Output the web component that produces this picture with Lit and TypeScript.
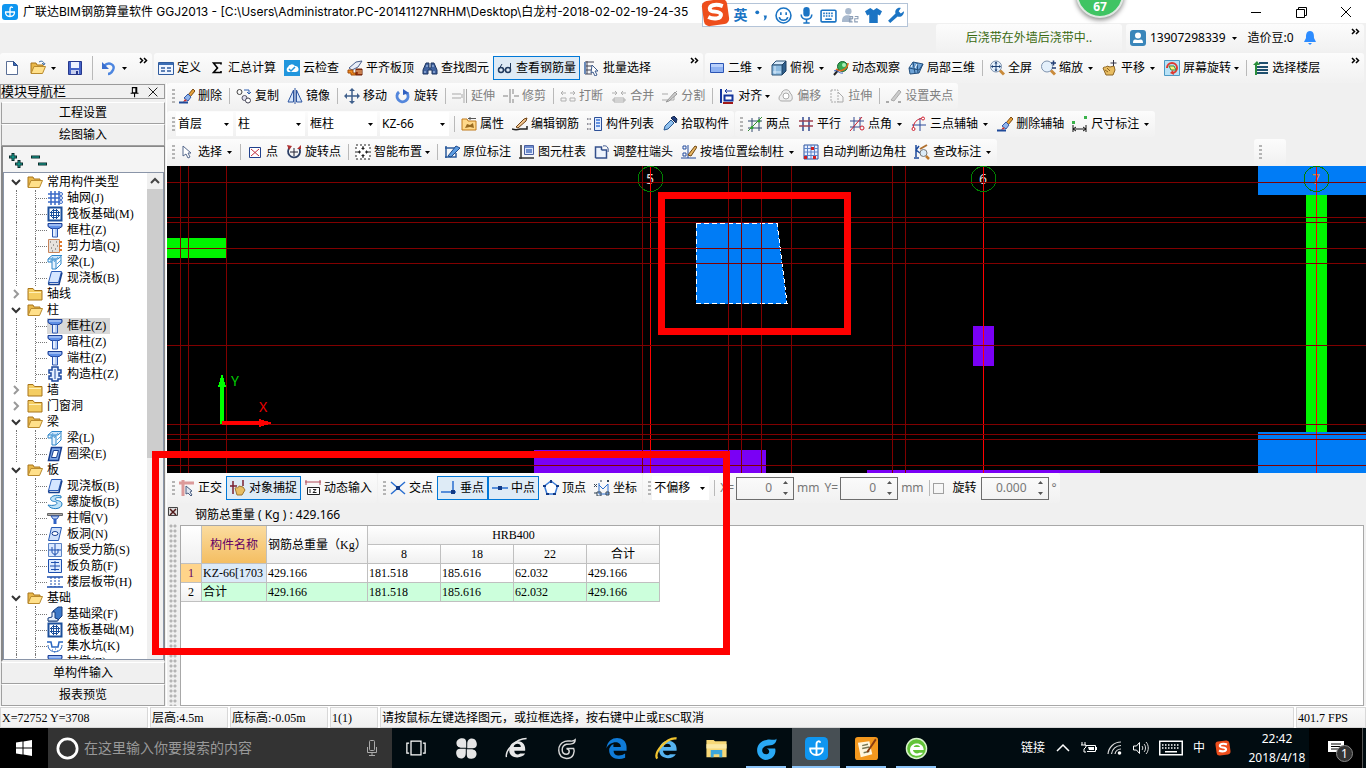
import { LitElement, html, svg, css, nothing, TemplateResult, SVGTemplateResult } from "lit";
import { customElement } from "lit/decorators.js";
import { classMap } from "lit/directives/class-map.js";

const folderOpen = svg`<path d="M1 13V3h5l1 2h6v2" fill="#e9b84a" stroke="#a8741a"/><path d="M1 13.500 4 6.500h11.500L12.500 13.500z" fill="#ffe08a" stroke="#b98a2e"/>`;
const pillar = svg`<path d="M1 1.500h14v3l-3 2H4l-3-2z" fill="#5f8fe6" stroke="#1c3f94"/><path d="M2 3h12" stroke="#d8e6ff"/><path d="M5.500 6.500h5V15h-5z" fill="#e4eeff" stroke="#2a55b0"/><path d="M9 7v7" stroke="#8fb0ea"/>`;
const raft = svg`<path d="M1.500 1.500h13v13h-13z" fill="#fff" stroke="#1b4f9c" stroke-width="2"/><path d="M5 4.500h6M5 11.500h6M4.500 5v6M11.500 5v6M6.500 3v10M9.500 3v10M3 6.500h10M3 9.500h10" stroke="#1b4f9c"/>`;
const beam = svg`<path d="M1 5 5 1.500h10L11 5z" fill="#cfe6fb" stroke="#2f86c9"/><path d="M5 6h4v9H5z" fill="#e6f3ff" stroke="#2f86c9"/><path d="M9 15l5-5V3M1 5v3h4" fill="none" stroke="#2f86c9"/><path d="m3 8 3-5M7 8l4-5M10 10l4-4" stroke="#5aa6df"/>`;
const slab = svg`<path d="M4.500 1.500h10l-3 11h-10z" fill="#d5e6ff" stroke="#2a5cb8"/><path d="m1.500 12.500.500 2h10l3-12" fill="none" stroke="#16408f" stroke-width="1.500"/>`;
const brush = svg`<path d="m9 7 5-6 2 2-5 6z" fill="#e6a23c" stroke="#7a4a12"/><path d="m5 10 4-4 3 3-3 4z" fill="#8fb4ec" stroke="#3558a5"/><path d="M6 11 4 14l4-1z" fill="#d0302a"/><path d="M0 14.500h9" stroke="#1f4a9a" stroke-width="2"/>`;
const cross4 = svg`<path d="M8 1v14M1 8h14" stroke="#40608c" stroke-width="1.500"/><path d="m8 0 3 3H5zM8 16l-3-3h6zM0 8l3-3v6zM16 8l-3 3V5z" fill="#40608c"/>`;
const lens = svg`<circle cx="7" cy="6.500" r="5.500" fill="#e4f0fb" stroke="#7f93ad"/><path d="m11 10.500 4 4" stroke="#c98a3a" stroke-width="3"/>`;

const ICONS: Record<string, SVGTemplateResult> = {
  folder: svg`<path d="M1 4.500V2.500h5l1.500 2H15v9.500H1z" fill="#f4cd62" stroke="#a8741a"/><path d="M2 6.500h12" stroke="#fff0b8"/>`,
  folderOpen, pillar, raft, beam, slab, brush,
  page: svg`<path d="M2.500 1.500h7l4 4v9h-11z" fill="#fff" stroke="#5a6f96"/><path d="M9.500 1.500v4h4z" fill="#3f6cb5" stroke="#2b4d8c"/>`,
  open: svg`${folderOpen}<path d="M9 2c3-2 5 0 5 2m-2-1 2 2 1-2" fill="none" stroke="#3f6fa5"/>`,
  save: svg`<path d="M1.500 1.500h13v13h-13z" fill="#4463c8" stroke="#27388c"/><path d="M4 2h8v6H4z" fill="#eef2ff"/><path d="M4 10h8v4H4z" fill="#c7cfee"/><path d="M9 11h2v3H9z" fill="#27388c"/>`,
  undo: svg`<path d="M3 6c5-5 12-1 9 4-1 2-3 4-5 4" fill="none" stroke="#4d86e0" stroke-width="2.500"/><path d="M1 2v7h7z" fill="#3a6fd0"/>`,
  define: svg`<path d="M.500 2.500h15v12H.500z" fill="#eef4ff" stroke="#2f5b9e"/><path d="M1 3h14v2H1z" fill="#3b6db4"/><path d="M3 8h4M3 11h4M9 8h4M9 11h4" stroke="#2f5b9e" stroke-width="1.500"/>`,
  sigma: svg`<path d="M12 4.500V3H4.500L8.500 8l-4 4.500H12V11" fill="none" stroke="#000" stroke-width="1.600"/>`,
  cloud: svg`<path d="M0 0h16v16H0z" fill="#2196dd"/><path d="M4 12a3 3 0 0 1 0-5 4 4 0 0 1 7-1 3 3 0 0 1 1 6z" fill="#fff"/><path d="m5 9 2 2 4-4" fill="none" stroke="#2196dd" stroke-width="1.500"/>`,
  align: svg`<path d="m2 8 7-6 6-1-4 6-6 3z" fill="#e9eef8" stroke="#4a5f8c"/><path d="M1 10h5v3h3v2H4v-2H1z" fill="#f08a1d" stroke="#a04a0a"/><path d="M9 9h6v6H9z" fill="#a33a12" stroke="#6b1f05"/><path d="M9 11h6M11 13h4" stroke="#f3c48a"/>`,
  find: svg`<path d="M4 3h3v5h2V3h3l3 7v4h-5v-4H6v4H1v-4z" fill="#41639f" stroke="#1d355f"/><path d="M3 11v2M12 11v2M5 5v2M11 5v2" stroke="#b9d0f3"/>`,
  glasses: svg`<circle cx="4" cy="10" r="2.500" fill="none" stroke="#203a5e" stroke-width="1.500"/><circle cx="11" cy="10" r="2.500" fill="none" stroke="#203a5e" stroke-width="1.500"/><path d="M6.500 10h2M2 9l3-5M13.500 9V3" fill="none" stroke="#203a5e"/>`,
  batch: svg`<path d="M1 2h9M1 6h7M1 10h6M3 1v13M1 14h7" stroke="#445"/><path d="M0 2h2v12H0z" fill="#6a8ab8"/><path d="m8 5 6 6h-3l2 4-2 1-2-4-2 1z" fill="#fff" stroke="#3c5a8c"/>`,
  rect2d: svg`<path d="M1.500 3.500h13v9h-13z" fill="#8fb2f2" stroke="#2b55b5"/><path d="M2 4h12v3H2z" fill="#b9d0fb"/>`,
  cube: svg`<path d="m1 5 4-4h10l-4 4z" fill="#d9ebfb" stroke="#2b5276"/><path d="m11 5 4-4v10l-4 4z" fill="#2f5f8c" stroke="#1f3f60"/><path d="M1 5h10v10H1z" fill="#8dbbe0" stroke="#2b5276"/><path d="M4 6v8M2 12h8" stroke="#d9ebfb"/>`,
  orbit: svg`<path d="m1 15 6-7" stroke="#222" stroke-width="2"/><circle cx="9.500" cy="6.500" r="5" fill="#36a852" stroke="#176330"/><circle cx="11" cy="5" r="2" fill="#a8efb8"/><path d="M3 9c4 4 12 0 12-6" fill="none" stroke="#e06a1d" stroke-width="1.500"/><path d="M1 11c3-2 5 3 9 2" fill="none" stroke="#3a62c0"/>`,
  local3d: svg`<path d="m1 8 4-6 10 2-4 9-9 1z" fill="#6ea3d6" stroke="#24507e"/><path d="m1 8 10 2 4-6M5 2l2 11M9 3l1 10" fill="none" stroke="#24507e"/><path d="m3 7 1-2M7 8l2-4" stroke="#fff"/>`,
  full: svg`${lens}<path d="M7 2v9M2.500 6.500h9" stroke="#1b3f74"/><path d="m7 1.500 1.500 2h-3zM7 11.500l-1.500-2h3zM2 6.500l2-1.500v3zM12 6.500 10 8V5z" fill="#1b3f74"/>`,
  zoom: svg`${lens}<path d="M11 3h5M13.500.500v5M12 8h4" stroke="#243f75" stroke-width="1.500"/>`,
  pan: svg`<path d="M1 8c2-2 3 0 4-2l3 1 4-1 1 4-2 5H4z" fill="#e8bd62" stroke="#8c6423"/><path d="M11.500 0v6M8.500 3h6" stroke="#334"/><path d="m3 10 3 2M5 8l3 3" stroke="#8c6423"/>`,
  screenrot: svg`<path d="M.500.500h15v15H.500z" fill="#b9e2f6" stroke="#4c9ac5"/><path d="M3 8a5 5 0 1 1 5 5" fill="none" stroke="#e0392e" stroke-width="2"/><path d="M5 6h5l2 4H7z" fill="#fff27c" stroke="#3a8a3a"/><path d="m9 10-3 3 4 2z" fill="#e0392e"/>`,
  floors: svg`<path d="m0 5 4-4 3 4z" fill="#2b8f3b"/><path d="M6 3h9M4 7h11M4 10h11M4 13h11" stroke="#1f4f6e" stroke-width="2"/><path d="M3 5v10" stroke="#2b8f3b" stroke-width="2"/>`,
  user: svg`<rect width="16" height="16" rx="3" fill="#3a86ba"/><circle cx="8" cy="5.500" r="3" fill="#fff"/><path d="M3 13c0-5 3-3 5-3s5-2 5 3z" fill="#fff"/>`,
  bell: svg`<path d="M8 1c4 0 4 4 4 7l2 4H2l2-4c0-3 0-7 4-7z" fill="#2d8cff"/><path d="M6 13h4l-2 2z" fill="#2d8cff"/>`,
  copy: svg`<circle cx="3.500" cy="4" r="2.500" fill="none" stroke="#444"/><circle cx="8.500" cy="10" r="2.500" fill="#dde" stroke="#556"/><circle cx="12" cy="12.500" r="2.500" fill="#fff" stroke="#445"/><path d="M8 2h5v4m-2-2 2 2 2-2" fill="none" stroke="#2f5fb0"/>`,
  mirror: svg`<path d="M6.500 2v12H1zM9.500 2v12H15z" fill="#d8e7fb" stroke="#2c55a0"/><path d="M8 0v16" stroke="#2c55a0"/>`,
  move: cross4,
  rotate: svg`<path d="M4 4a5.500 5.500 0 1 0 8 1" fill="none" stroke="#5487dc" stroke-width="3"/><path d="M8 1v6l6-2z" fill="#2f5fc0"/>`,
  extend: svg`<path d="M0 6h9M0 10h9M10 6v4M14.500 1v14M12 1v14" stroke="#a9a9a9"/>`,
  trim: svg`<path d="M0 8h5M11 8h5M7 1v14M10 1v5M10 11v4" stroke="#a9a9a9" stroke-width="1.500"/>`,
  brk: svg`<path d="M1 5h5m-3-2L1 5l2 2M15 5h-5m3-2 2 2-2 2M1 10h5v3H1zM10 10h5v3h-5z" fill="none" stroke="#b0b0b0"/>`,
  merge: svg`<path d="M1 5h5M4 3l2 2-2 2M15 5h-5m2-2-2 2 2 2M1 12h14M3 10h10v4H3z" fill="none" stroke="#b0b0b0"/>`,
  split: svg`<path d="M0 6h6M0 12h12V6l3-3" fill="none" stroke="#a9a9a9"/><path d="m4 14 9-10 2 2-8 7z" fill="#ccc" stroke="#999"/>`,
  alignto: svg`<path d="M2 1v14" stroke="#14359c" stroke-width="2"/><path d="M5.500 7.500h8v5h-8z" fill="#fff" stroke="#14359c" stroke-width="2"/><path d="M13 3H6m2-2L6 3l2 2" fill="none" stroke="#14359c"/><path d="M4 15h10" stroke="#a01818" stroke-width="2"/>`,
  offset: svg`<path d="M1 10c0-3 3-3 3-6 3-4 8-2 8 1 3 2 3 8 0 8H4c-2 0-3-1-3-3z" fill="#eee" stroke="#aaa"/><circle cx="8" cy="8" r="3" fill="#fff" stroke="#aaa"/>`,
  stretch: svg`<path d="M2 2h7v12H2z" fill="none" stroke="#aaa" stroke-dasharray="2 1"/><path d="m9 4 5 5M14 9v5H9" fill="none" stroke="#aaa"/>`,
  grip: svg`<path d="M0 14h3M12 14h3" stroke="#aaa" stroke-width="2"/><path d="m5 12 8-10 2 2-7 9z" fill="#ccc" stroke="#aaa"/>`,
  prop: svg`<path d="M1 3h5l1 2h8v9H1z" fill="#ffd98a" stroke="#c07a1d"/><path d="M7 2.500h8M9 1v3" stroke="#555"/><path d="m4 12 2-4 3 1 3-2 1 5-4-1z" fill="#9a6b20"/>`,
  editbar: svg`<path d="M0 13c3 1 5 1 8 0h7v-3" fill="none" stroke="#222" stroke-width="1.500"/><path d="m4 11 8-8 3-1-1 3-8 7z" fill="#f2c48c" stroke="#6c4013"/>`,
  list: svg`<path d="M0 3h4M0 8h4M0 13h4" stroke="#334" stroke-dasharray="1.500 1"/><path d="M7.500 1.500h7v13h-7z" fill="#e2edff" stroke="#2d4f96"/><path d="M9 4h4M9 7h4M9 10h4" stroke="#3d76d8" stroke-width="1.500"/>`,
  pick: svg`<path d="m2 14 1-4 6-6 3 3-6 6z" fill="#8fc0ee" stroke="#2a5a93"/><path d="m9 2 5 5 1-4-3-3z" fill="#213f7d" stroke="#12264f"/>`,
  twopt: svg`<path d="M5 2v14M12 1v14M1 5h14M1 12h14" stroke="#354a70"/><path d="m1 15 14-14" stroke="#2f8c2f"/><circle cx="5" cy="11.500" r="1.500" fill="#2fa12f"/><circle cx="12" cy="5" r="1.500" fill="#2fa12f"/>`,
  parallel: svg`<path d="M5 1v14M11 1v14" stroke="#354a90" stroke-width="1.500"/><path d="M1 5h14M1 10h14" stroke="#a04050" stroke-width="1.500"/>`,
  ptangle: svg`<path d="M5 1v14M11 1v10M1 5h14M1 11h10" stroke="#354a90"/><path d="m1 15 12-14" stroke="#cc2030"/><circle cx="13" cy="12" r="2" fill="none" stroke="#cc2030"/>`,
  threept: svg`<path d="M1 9h14M9 2v13" stroke="#2c4a9a"/><path d="M2 14C2 6 6 3 12 2" fill="none" stroke="#d02030"/><circle cx="2.500" cy="13" r="1.500" fill="#fff" stroke="#d02030"/><circle cx="12" cy="2.500" r="1.500" fill="#fff" stroke="#d02030"/>`,
  dim: svg`<path d="M1 9v7M14 9v7M1 13h13M4 11l-3 2 3 2M11 11l3 2-3 2" fill="none" stroke="#111"/><path d="M0 5h3v3H0zM12 0h3v3h-3z" fill="#39b24a"/>`,
  cursor: svg`<path d="M4 2v10l3-2 2 4 2-1-2-4h3z" fill="#fff" stroke="#55688c"/>`,
  point: svg`<path d="M2.500 3.500h11v10h-11z" fill="#fff" stroke="#20408c"/><path d="m4 5 8 7M12 5l-8 7" stroke="#c03040"/>`,
  rotpoint: svg`<path d="M4 3a6 6 0 1 0 9 1" fill="none" stroke="#2c3f66" stroke-width="1.800"/><path d="M8 4v8M4 8h8" stroke="#223"/><path d="m1 1 5 1-3 4zM15 1v4h-4z" fill="#b03030"/>`,
  smart: svg`<path d="M1 1h14v14H1z" fill="#fff" stroke="#222" stroke-dasharray="2 2"/><path d="M8 2v12M2 8h12" stroke="#222" stroke-dasharray="4 4"/><path d="m8 3 2 2H6zM8 13l-2-2h4zM3 8l2-2v4zM13 8l-2 2V6z" fill="#222"/>`,
  insitu: svg`<path d="M1 4h10M2 2v12M1 13h11V9" fill="none" stroke="#2a5a9c" stroke-width="1.500"/><path d="m4 12 8-10 4 2-9 9z" fill="#5c9be0" stroke="#1c4a8c"/>`,
  coltable: svg`<path d="M2 1v14M0 14h15" stroke="#333" stroke-width="1.500"/><path d="M5.500 1.500h9v9h-9z" fill="#dfe8fb" stroke="#4a5fa0"/><path d="M6 3h8M7 6h6M7 8h6" stroke="#4a6fc0" stroke-width="1.500"/>`,
  adjust: svg`<path d="M1.500 14V3h6v3m0 0h5v8h-11" fill="#eef3fc" stroke="#34508c" stroke-width="1.500"/><path d="M9 2c4-1 6 2 5 6" fill="none" stroke="#34508c"/>`,
  bywall: svg`<path d="M2 2h3v3H2zM2 9h3v3H2z" fill="#fff" stroke="#234a9c"/><path d="M0 14h15M7 1v13" stroke="#234a9c"/><path d="m7 11 7-9 2 1-6 9z" fill="#e9b763" stroke="#704610"/>`,
  autocorner: svg`<path d="M1 1h14v14H1z" fill="#e8f0ff" stroke="#2c55a0"/><path d="M4.500 1v14M8 1v14M11.500 1v14M1 4.500h14M1 8h14M1 11.500h14" stroke="#5d83c8"/><path d="M8 3h3v3H8zM1 12h3v3H1zM10 12h3v3h-3z" fill="#d02020"/>`,
  checkdim: svg`<path d="M2 1v12M5 2 2 6l4 3M0 14h5" fill="none" stroke="#1c4a9c" stroke-width="1.500"/><circle cx="9.500" cy="9" r="3.500" fill="#dcecf8" stroke="#777"/><path d="m12 12 3 3" stroke="#c07a2a" stroke-width="2.500"/><path d="m6 5 7-4" stroke="#b07030" stroke-width="2"/>`,
  ortho: svg`<path d="M0 3h15M4 0v16" stroke="#dc9a9a" stroke-width="3"/><path d="m7 6 6 5-2 1 2 3-1 1-3-3-2 1z" fill="#dfe6f0" stroke="#4a5d80"/>`,
  snap: svg`<path d="M3 1v13M0 6h7M13 0v6" stroke="#7a2030" stroke-width="1.500"/><path d="M5 8c2-1 3 1 4-2l4 1 2 3-3 5H7z" fill="#e8bd62" stroke="#9c7530"/>`,
  dyninput: svg`<path d="M0 2h16M1 0v5M15 0v5" stroke="#b04a58"/><path d="M2.500 7.500h12v7h-12z" fill="#fff" stroke="#222"/><path d="M5 9v4M8 9.500h3L8 12.500h3.500" fill="none" stroke="#222"/>`,
  xcross: svg`<path d="m1 2 14 12M15 2 1 14" stroke="#2a6fd0" stroke-width="1.500"/><path d="M6 6h4v4H6z" fill="#123a86"/>`,
  perp: svg`<path d="M0 12h15M12 1v11" stroke="#2a6fd0" stroke-width="1.500"/><path d="M10 10h4v4h-4z" fill="#123a86"/>`,
  mid: svg`<path d="M0 8h16" stroke="#2a6fd0" stroke-width="1.500"/><path d="M6 6h4v4H6z" fill="#123a86"/>`,
  vertex: svg`<path d="m8 1 6.500 5-2.500 8H4L1.500 6z" fill="#fff" stroke="#3a7bd8" stroke-width="1.500"/><path d="M7 0h2v3H7zM0 5h3v2H0zM13 5h3v2h-3zM3 13h3v2H3zM10 13h3v2h-3z" fill="#123a86"/>`,
  coord: svg`<path d="M5 3v11h10M5 5l4 4 5-5v10" fill="none" stroke="#2a6fd0"/><path d="m0 4 3 3M3 4l-3 3M0 13h3M6 1h2M13 0l2 2M15 0l-2 2M3 12h4v4H3zM12 12h3v3h-3z" fill="none" stroke="#345"/>`,
  grid: svg`<path d="M4 1v14M8 1v14M12 1v14M1 4h14M1 8h14M1 12h14" stroke="#3a6ac8" stroke-width="1.500"/><circle cx="14" cy="4" r="1.500" fill="#fff" stroke="#3a6ac8"/><circle cx="14" cy="8" r="1.500" fill="#fff" stroke="#3a6ac8"/><circle cx="14" cy="12" r="1.500" fill="#fff" stroke="#3a6ac8"/>`,
  shear: svg`<path d="M1.500 1.500h11v13h-11z" fill="#e6e2de" stroke="#c8845a"/><path d="M3 4h1M6 7h1M9 4h1M4 10h1M8 11h1M10 8h1M5 13h1" stroke="#555"/><path d="M12 4h3M12 8h3M12 12h3" stroke="#e07a2a" stroke-width="2"/>`,
  tie: svg`<path d="M5 1h6v3h3v3h-2v3h2v3h-3v2H5v-2H2v-3h2V7H2V4h3z" fill="#e3eeff" stroke="#1e4aa0" stroke-width="1.500"/><path d="M8 3v10" stroke="#1e4aa0"/>`,
  ring: svg`<path d="M4.500 1.500h10l-3 13h-10z" fill="#7da7e8" stroke="#173f90" stroke-width="1.500"/><path d="M6.500 4.500h5l-2 7h-5z" fill="#fff" stroke="#173f90"/>`,
  spiral: svg`<path d="M14 2C8 0 2 3 4 6c1 2 6 1 6 3s-4 3-9 2c2 5 14 5 14-1 0-4-7-3-7-5 0-1 3-2 6-1z" fill="#bfe4fa" stroke="#1f7cc0"/>`,
  cap: svg`<path d="M.500 3.500h15v2H.500z" fill="#aaa" stroke="#666"/><path d="M4 6h8l-2 3H6z" fill="#bcd2f6" stroke="#2a55b0"/><path d="M6.500 9h3v5h-3z" fill="#2f62c6"/>`,
  hole: svg`<path d="M4.500 1.500h10l-3 13h-10z" fill="#cfe1fb" stroke="#2459b5"/><ellipse cx="8" cy="7.500" rx="3" ry="2" fill="#fff" stroke="#173f90"/>`,
  rebar: svg`<path d="M1.500 1.500h13v13h-13z" fill="#dceaff" stroke="#5b82c4"/><path d="M2 8h12M8 2v12M5 5v5c0 3 6 3 6 0V7" fill="none" stroke="#1d4fae"/>`,
  negrebar: svg`<path d="M1.500 1.500h13v13h-13z" fill="#dceaff" stroke="#1d4fae"/><path d="M8 3v10M4 4.500h8M4 11.500h8M3 8h10" fill="none" stroke="#1d4fae"/>`,
  strip: svg`<path d="M0 3h16M0 13h16" stroke="#1d4fae" stroke-width="1.500"/><path d="M4 3v10M8 3v10M12 3v10" stroke="#1d4fae" stroke-dasharray="2 1"/>`,
  fbeam: svg`<path d="m1 15 5-4V5l5-4h4v9l-5 5z" fill="#3c78c8" stroke="#133a7c"/><path d="M1 15v-3l4-1V6h3v6l3 1v2z" fill="#e3eefc" stroke="#133a7c"/>`,
  pit: svg`<path d="M0 4h4l1 5h6l1-5h4" fill="none" stroke="#2a66c0" stroke-width="1.500"/><path d="M1 7c0 9 14 9 14 0" fill="none" stroke="#2a66c0"/><path d="M5 12h1M8 11h1M10 13h1M7 14h1" stroke="#2a66c0"/>`,
  logo: svg`<rect width="16" height="16" rx="3" fill="#0f96f0"/><path d="M8 12.500V5c0-2.500 2.500-2.500 2.500-1M3 8h10M3.500 8c0 6 9 6 9 0" fill="none" stroke="#fff" stroke-width="1.300"/>`,
  pin: svg`<path d="M5 3h5v6H5zM9 3v6M3 9.500h9M7.500 10v4" fill="none" stroke="#000" stroke-width="1.200"/>`,
  close: svg`<path d="m3 3 10 10M13 3 3 13" stroke="#000"/>`,
  min: svg`<path d="M3 8.500h10" stroke="#000"/>`,
  restore: svg`<path d="M5.500 5V3.500h8v8H12M3.500 5.500h8v8h-8z" fill="none" stroke="#000"/>`,
  expand: svg`<path d="M1 5h8M5 1v8M7 12h8M11 8v8" stroke="#0a2a2a" stroke-width="3"/><path d="M2 5h6M5 2v6M8 12h6M11 9v6" stroke="#16b0a0"/>`,
  collapse: svg`<path d="M0 5h9M7 12h9" stroke="#0a2a2a" stroke-width="3"/><path d="M1 5h7M8 12h7" stroke="#16b0a0"/>`,
  more: svg`<path d="m4 5 2.500 2.500L4 10m4-5 2.500 2.500L8 10" fill="none" stroke="#000" stroke-width="1.500"/>`,
  down: svg`<path d="m4 6 4 4 4-4" fill="none" stroke="#333" stroke-width="2"/>`,
  right: svg`<path d="m6 4 4 4-4 4" fill="none" stroke="#999" stroke-width="2"/>`,
  up: svg`<path d="m4 10 4-4 4 4" fill="none" stroke="#444" stroke-width="2"/>`,
  smile: svg`<circle cx="8" cy="8" r="7" fill="none" stroke="#1b74c4" stroke-width="1.500"/><path d="M5.500 5v2.500M10.500 5v2.500M4 9.500c1 4 7 4 8 0" fill="none" stroke="#1b74c4" stroke-width="1.500"/>`,
  punct: svg`<circle cx="4" cy="5" r="1.800" fill="#1b74c4"/><path d="M10 8h3c0 3-1 4-3 5 1-2 1-3 0-5z" fill="#1b74c4"/>`,
  mic: svg`<rect x="5" y="0" width="6" height="9" rx="3" fill="#1b74c4"/><path d="M3 7c0 6 10 6 10 0M8 12v3M5 15h6" fill="none" stroke="#1b74c4" stroke-width="1.500"/>`,
  keys: svg`<rect x="1" y="3" width="14" height="11" rx="1" fill="none" stroke="#1b74c4" stroke-width="1.500"/><path d="M3 6h10M3 8.500h10" stroke="#1b74c4" stroke-width="1.500" stroke-dasharray="1.500 1"/><path d="M5 11.500h6" stroke="#1b74c4" stroke-width="1.500"/>`,
  person: svg`<circle cx="6" cy="4" r="3" fill="#a9b9cd"/><path d="M0 13c0-6 6-6 9-4v5H0z" fill="#a9b9cd"/><path d="M7 9h3v2H7v3h3M12 9h3v2h-3v3h3" fill="none" stroke="#8b9db5"/>`,
  shirt: svg`<path d="m5 1 3 2 3-2 5 3-2 4-2-1v8H4V7L2 8 0 4z" fill="#1b74c4"/>`,
  wrench: svg`<path d="m1 13 7-7c-1-3 2-6 5-5l-2 3 2 2 3-2c0 4-3 6-6 5l-7 6z" fill="#1b74c4"/>`,
  sogou: svg`<rect x="1" y="1" width="14" height="14" rx="3" fill="#ee4e1c" transform="rotate(-8 8 8)"/><path d="M12 4.500C8 3 4 4 5 6.500c.500 1.500 5.500.500 6 2.500.500 2.500-4 3-7 1.500" fill="none" stroke="#fff" stroke-width="2.200"/>`,
  win: svg`<path d="m0 2.500 6.500-1v6H0zM7.500 1.400 16 0v7.500H7.500zM0 8.500h6.500v6l-6.500-1zM7.500 8.500H16V16l-8.500-1.400z" fill="#fff"/>`,
  cortana: svg`<circle cx="8" cy="8" r="6.700" fill="none" stroke="#fff" stroke-width="1.900"/>`,
  tmic: svg`<rect x="5.500" y=".500" width="5" height="10" rx="1" fill="none" stroke="#aaa"/><path d="M3.500 7v5.500h9V7M8 12.500v3M5 15.500h6" fill="none" stroke="#aaa"/>`,
  taskview: svg`<path d="M4 2.500h8v11H4zM2.500 4H.700v8h1.800M13.500 4h1.800v8h-1.800" fill="none" stroke="#fff"/>`,
  clover: svg`<path d="M5 .800c2 0 2.800 1 2.800 3v3.700H5C2 7.500 1 6 1 4.200 1 2 3 .800 5 .800zM15.200 5c0 2-1 2.800-3 2.800H8.500V5c0-3 1.500-4 3.300-4 2.200 0 3.400 2 3.400 4zM11 15.200c-2 0-2.800-1-2.800-3V8.500H11c3 0 4 1.500 4 3.300 0 2.200-2 3.400-4 3.400zM.800 11c0-2 1-2.800 3-2.800h3.700V11c0 3-1.500 4-3.300 4C2 15 .800 13 .800 11z" fill="#e6e6e6"/>`,
  eWhite: svg`<path d="M4 9.500h10C15 1 4 1 3 8.500c-1 7 9 7 11 3h-3.500C9 13 6.500 12 6.500 9.500M6 7c.500-3 5-3 5 0z" fill="#e8e8e8" fill-rule="evenodd"/><path d="M1 14C0 10 7 1 15 1" fill="none" stroke="#e8e8e8"/>`,
  gOutline: svg`<path d="M14 2c-2 2-4 0-7 1-6 2-6 11 1 12 5 0 6-5 5-7H8c3 1 2 4 0 4-4 0-4-6 0-7 3 0 6 0 6-3z" fill="none" stroke="#d8d8d8"/>`,
  edge: svg`<path d="M1 8C2-2 15-1 15 7v2.500H6c0 4 5 4 8 2v3C8 17 2 14 3 8c1-2 2-3 3-3 0 1-.500 1 0 2h5c0-5-8-4-10 1z" fill="#0f7bd8"/>`,
  ie: svg`<path d="M5.500 9.500H15C16 1 4 0 3 8.500c-1 7 9 8 11.500 3.500h-4C9 13.500 6 12.500 5.500 9.500zM6 7c.500-3 5-3 5 0z" fill="#55b3f0" fill-rule="evenodd"/><path d="M1.500 15C-1 11 8 0 15 1" fill="none" stroke="#f2c530" stroke-width="1.600"/>`,
  explorer: svg`<path d="M1 2h5l1 1h8v11H1z" fill="#f7d877"/><path d="M1 5h14v3H1z" fill="#fbe9a6"/><path d="M4 9h8v5h-2v-2H6v2H4z" fill="#3ca7dc"/>`,
  gBlue: svg`<path d="M15 1c-1 2-4 0-7 1-8 1-9 12-1 14 6 0 8-5 7-8H8c3 1 2 4 0 4-4 0-4-5 0-6 4 0 7-1 7-5z" fill="#29a9f5"/>`,
  note: svg`<rect width="16" height="16" rx="2" fill="#f3981e"/><path d="m2 4 8-1 2 9-8 2z" fill="#fff6df"/><path d="m5 6 4-1M5 8l5-1M6 11l4-1" stroke="#775"/><path d="m8 10 6-9 1 1-6 9z" fill="#8a3c10"/>`,
  eGreen: svg`<circle cx="8" cy="8" r="7" fill="#62c338" stroke="#d9f3cc"/><path d="M5.500 9H13c0-6-9-6-9.500-.500C3 14 11 14 12.500 11H10c-2 1-4 0-4.500-2zM6 7c.500-2 4-2 4.500 0z" fill="#fff" fill-rule="evenodd"/>`,
  chevUp: svg`<path d="m2 11 6-6 6 6" fill="none" stroke="#fff" stroke-width="1.500"/>`,
  battery: svg`<path d="M4.500 5.500h10v6H6M15.500 7v3" fill="none" stroke="#fff"/><path d="M7 7h6v3H8z" fill="#fff"/><path d="M1 2v3M4 2v3M0 5h5v2L3 9v3h2" fill="none" stroke="#fff"/>`,
  wifi: svg`<path d="M1 14A13 13 0 0 1 14 2M4.500 14A9.500 9.500 0 0 1 14 5.500M8 14a6 6 0 0 1 6-5" fill="none" stroke="#ddd" stroke-width="1.200"/><circle cx="12.500" cy="13" r="1.800" fill="#fff"/>`,
  sound: svg`<path d="M.500 6h3l3-3.500v11l-3-3.500h-3z" fill="none" stroke="#fff"/><path d="M9 6c1 1 1 3 0 4M11 4c2 2 2 6 0 8M13 2c3 3 3 9 0 12" fill="none" stroke="#ddd"/>`,
  tkeys: svg`<path d="M.500 3.500h15v9H.500z" fill="none" stroke="#fff"/><path d="M2 6h12M2 8h12" stroke="#fff" stroke-dasharray="1 1"/><path d="M4 10.500h8" stroke="#fff"/>`,
};

const icon = (name: string, cls = ""): TemplateResult =>
  html`<svg class="ic ${cls}" viewBox="0 0 16 16" fill="none" aria-hidden="true">${ICONS[name]}</svg>`;
const tri = html`<svg class="tri" viewBox="0 0 5 3" aria-hidden="true"><path d="M0 0h5L2.500 3z" fill="currentColor"/></svg>`;
const sep = html`<span class="sep"></span>`;
const handle = html`<span class="handle"></span>`;

type Opts = { drop?: boolean; split?: boolean; on?: boolean; off?: boolean };
const tool = (name: string, text: string, o: Opts = {}): TemplateResult => html`
  <button class=${classMap({ tool: true, on: !!o.on, split: !!o.split })} ?disabled=${!!o.off}>
    ${icon(name)}${text ? html`<span>${text}</span>` : nothing}${o.drop || o.split ? tri : nothing}
  </button>`;
const combo = (label: string, value: string, cls = ""): TemplateResult => html`
  <label class="combo ${cls}"><select aria-label=${label}><option>${value}</option></select>${tri}</label>`;
const spin = (label: string, value: string, cls = ""): TemplateResult => html`
  <span class="spin ${cls}"><input aria-label=${label} .value=${value} disabled />
    <svg class="arrows" viewBox="0 0 5 14" aria-hidden="true"><path d="M0 3h5L2.500 0zM0 11h5L2.500 14z" fill="#555"/></svg></span>`;

type Node = { icon: string; text: string; depth: 0 | 1; open?: boolean; sel?: boolean };
const branch = (text: string, leaves: [string, string, boolean?][] | null): Node[] => [
  { icon: leaves ? "folderOpen" : "folder", text, depth: 0, open: !!leaves },
  ...(leaves ?? []).map(([i, t, sel]): Node => ({ icon: i, text: t, depth: 1, sel })),
];
const TREE: Node[] = [
  ...branch("常用构件类型", [["grid", "轴网(J)"], ["raft", "筏板基础(M)"], ["pillar", "框柱(Z)"], ["shear", "剪力墙(Q)"], ["beam", "梁(L)"], ["slab", "现浇板(B)"]]),
  ...branch("轴线", null),
  ...branch("柱", [["pillar", "框柱(Z)", true], ["pillar", "暗柱(Z)"], ["pillar", "端柱(Z)"], ["tie", "构造柱(Z)"]]),
  ...branch("墙", null),
  ...branch("门窗洞", null),
  ...branch("梁", [["beam", "梁(L)"], ["ring", "圈梁(E)"]]),
  ...branch("板", [["slab", "现浇板(B)"], ["spiral", "螺旋板(B)"], ["cap", "柱帽(V)"], ["hole", "板洞(N)"], ["rebar", "板受力筋(S)"], ["negrebar", "板负筋(F)"], ["strip", "楼层板带(H)"]]),
  ...branch("基础", [["fbeam", "基础梁(F)"], ["raft", "筏板基础(M)"], ["pit", "集水坑(K)"], ["pillar", "柱墩(Z)"]]),
];

const H_AXES = [16, 51, 56, 82, 97, 179, 258, 268, 273, 299];
const V_AXES = [13, 21, 59, 475, 561, 574, 594, 624, 725, 738];
const MAIN_AXES: [number, string, string][] = [[483, "5", "#ddd"], [816, "6", "#ddd"], [1149, "7", "#c88a5a"]];

@customElement("app-root")
export class AppRoot extends LitElement {
  static styles = css`
    :host { display: flex; flex-direction: column; height: 100vh; position: relative; overflow: hidden; background: #f0f0f0; color: #000;
      font: 12px/16px "Noto Sans", "Noto Sans CJK SC", sans-serif; }
    * { box-sizing: border-box; }
    button, input, select { font: inherit; color: inherit; border: 0; padding: 0; margin: 0; background: none; }
    .nav, .status, table { font-family: "Liberation Serif", "Noto Sans CJK SC", sans-serif; }
    .ic { width: 16px; height: 16px; flex: none; display: block; }
    .tri { width: 5px; height: 3px; flex: none; }
    .title { display: flex; align-items: center; height: 23px; flex: none; background: #fff; padding-left: 2px; gap: 5px; white-space: nowrap; }
    .title h1 { font: inherit; font-family: "Inter", "Noto Sans CJK SC", sans-serif; margin: 0; flex: 1; overflow: hidden; }
    .winbtn { width: 40px; display: flex; justify-content: center; }
    .bars { display: flex; flex: none; gap: 2px; height: 30px; align-items: stretch; padding-right: 2px; }
    .bar { display: flex; align-items: center; background: linear-gradient(#fcfcfc, #f1f1f1); border-radius: 3px; white-space: nowrap; }
    .bars.account { justify-content: flex-end; gap: 4px; padding: 1px 2px 1px 0; }
    .tip { width: 186px; justify-content: center; color: #3a6a10; }
    .account .user { width: 238px; gap: 8px; padding-left: 4px; }
    .user a { color: inherit; text-decoration: none; display: flex; align-items: center; gap: 4px; }
    .user .tri { margin: 0 3px 0 2px; }
    .push { margin-left: auto; align-self: flex-start; }
    .bar.quick { width: 152px; gap: 2px; }
    .quick .sep { height: 24px; }
    .bar.mid { flex: 0 0 549px; }
    .bar.view { flex: 1; min-width: 0; overflow: hidden; }
    .tool { display: flex; align-items: center; gap: 3px; padding: 0 3px; height: 26px; flex: none; border: 1px solid transparent; }
    .tool.split .tri { margin-left: 2px; margin-right: 1px; }
    .tool:disabled { color: #808080; }
    .tool.on { background: #deebf6; border-color: #0078d7; height: 24px; }
    .sep { width: 1px; height: 16px; background: #b9b9b9; margin: 0 2px 0 3px; flex: none; }
    .combo + .sep { margin-left: 5px; }
    .handle { width: 3px; height: 15px; margin: 0 0 0 5px; flex: none; background: repeating-linear-gradient(#b5b5b5 0 2px, transparent 2px 4px); }
    .combo { display: grid; align-items: center; width: 69px; height: 24px; background: #fff; margin-left: 3px; }
    .combo.short { width: 57px; margin-left: 1px; }
    .combo > * { grid-area: 1 / 1; }
    .combo select { appearance: none; width: 100%; height: 24px; padding-left: 2px; outline: 0; }
    .combo .tri { justify-self: end; margin-right: 4px; pointer-events: none; }
    .body { flex: 1; min-height: 0; display: flex; }
    .nav { width: 167px; flex: none; display: flex; flex-direction: column; padding: 1px 1px 0 0; border-right: 1px solid #fff; }
    .nav header { display: flex; align-items: center; border: 1px solid #9a9a9a; height: 15px; font-size: 13px; margin-bottom: 3px; }
    .nav header span { flex: 1; }
    .nav header .ic { width: 14px; height: 14px; margin-right: 4px; }
    .tab { height: 22px; border: 1px solid #a0a0a0; border-top-color: #fff; margin: 0 0 0 1px; text-align: center; flex: none; background: #f0f0f0; }
    .treebox { flex: 1; min-height: 0; border: 1px solid #888; border-width: 1px 1px 2px 2px; border-bottom-color: #f0f0f0; margin-left: 1px; background: #f4f4f4; display: flex; flex-direction: column; }
    .treebar { height: 25px; display: flex; gap: 7px; align-items: center; padding-left: 5px; flex: none; }
    .scroll { flex: 1; min-height: 0; display: flex; background: #fff; border: 1px solid #8a95a8; overflow: hidden; }
    .tree { flex: 1; margin: 0; padding: 1px 0 0; list-style: none; }
    .tree li { display: flex; align-items: center; height: 16px; padding-left: 4px; white-space: nowrap; }
    .tree .fold { margin-right: 3px; }
    .tree .lbl { padding: 0 4px; }
    .tree .leaf { margin-left: 12px; padding-left: 18px; border-left: 1px dotted #777; }
    .tree .twig { width: 12px; height: 16px; border-left: 1px dotted #777; background: repeating-linear-gradient(90deg, #777 0 1px, transparent 1px 2px) 0 8px / 12px 1px no-repeat; flex: none; }
    .tree .sel { background: #d9d9d9; }
    .pair { display: flex; align-items: center; }
    .sb { width: 16px; background: #f0f0f0; display: flex; flex-direction: column; }
    .sb .thumb { height: 269px; background: #cdcdcd; }
    .work { flex: 1; min-width: 0; display: flex; flex-direction: column; position: relative; }
    .rows { display: flex; flex-direction: column; gap: 2px; padding-bottom: 1px; }
    .line { display: flex; gap: 1px; height: 26px; }
    .line .bar { padding-right: 1px; }
    .stub { width: 32px; margin: 0 80px 0 auto; }
    .cad { flex: 1; min-height: 0; width: 100%; background: #000; display: block; shape-rendering: crispEdges; font-size: 14px; }
    .snapbar { display: flex; gap: 1px; height: 30px; flex: none; color: #000; }
    .snapbar .bar { padding-right: 1px; }
    .dim { color: #777; margin: 0 2px 0 3px; }
    .spin { display: flex; align-items: center; width: 58px; height: 23px; border: 1px solid #6d6d6d; color: #777; padding-right: 5px; gap: 11px; }
    .spin input { flex: 1; min-width: 0; width: 10px; text-align: right; }
    .spin.wide { width: 68px; }
    .arrows { width: 5px; height: 14px; }
    .rot { display: flex; align-items: center; gap: 9px; margin-right: 4px; }
    .rot input { appearance: none; width: 11px; height: 11px; border: 1px solid #a0a0a0; margin-left: 1px; }
    .result { height: 203px; flex: none; display: flex; }
    .dots { width: 12px; display: flex; flex-direction: column; padding-top: 3px; flex: none; }
    .dots i { flex: 1; margin: 2px 2px 0; background: radial-gradient(circle at 2px 2px, #b4b4b4 1px, transparent 2px) 0 0 / 4px 5px; }
    .pane { flex: 1; min-width: 0; display: flex; flex-direction: column; }
    .pane h2 { font: inherit; margin: 0; height: 22px; padding: 4px 0 0 16px; }
    .sheet { flex: 1; background: #fff; border: 1px solid #a8a8a8; margin: 0 2px 0 1px; }
    table { border-collapse: separate; border-spacing: 0; table-layout: fixed; width: 479px; line-height: 14px; }
    col.n { width: 21px; } col.a { width: 65px; } col.b { width: 101px; } col.c { width: 73px; }
    th, td { height: 19px; padding: 0 1px; border-right: 1px solid #c0c0c0; border-bottom: 1px solid #c0c0c0; font-weight: 400; white-space: nowrap; overflow: hidden; text-align: left; }
    th { text-align: center; background: linear-gradient(#fff, #f0f0f0); }
    th.hot { background: linear-gradient(#fbdc9f, #f4be62); color: #640064; }
    tbody th.hot { background: #ffd48a; }
    td.cur { background: #dbeaf9; }
    tr.sum td { background: #ccffdc; }
    .mark { position: absolute; left: -15px; top: 368px; width: 578px; height: 204px; border: 7px solid #f00; pointer-events: none; }
    .status { display: flex; gap: 2px; height: 22px; flex: none; padding-top: 1px; background: #fff; }
    .status span { border: 1px solid #d8d8d8; background: linear-gradient(#fafafa, #f0f0f0); padding: 2px 1px; white-space: nowrap; overflow: hidden; }
    .w1 { width: 148px; } .w2 { width: 78px; } .w3 { width: 98px; } .w4 { width: 48px; } .w5 { flex: 1; } .w6 { width: 70px; }
    .task { display: flex; height: 40px; flex: none; background: #010c11; color: #fff; align-items: stretch; }
    .task button, .tray > * { display: flex; align-items: center; justify-content: center; }
    .start { width: 48px; background: #000; }
    .search { display: flex; align-items: center; width: 344px; background: #333; padding: 0 12px 0 8px; gap: 5px; }
    .search .ic { width: 23px; height: 23px; }
    .search .mic { width: 16px; height: 16px; }
    .search input { flex: 1; min-width: 0; font-size: 14px; color: #999; outline: 0; }
    .search input::placeholder { color: #999; opacity: 1; }
    .apps { display: flex; gap: 2px; flex: 1; min-width: 0; }
    .app { width: 48px; }
    .app .ic { width: 23px; height: 23px; }
    .app .tv { width: 22px; height: 20px; }
    .app.run { background: linear-gradient(#8cc4f8, #8cc4f8) center bottom / 40px 2px no-repeat; }
    .app.act { background: linear-gradient(#8cc4f8, #8cc4f8) center bottom / 48px 2px no-repeat #474f54; }
    .tray { display: flex; align-items: stretch; gap: 10px; }
    .tray .kb { width: 24px; height: 24px; align-self: center; }
    .tray .ic { align-self: center; }
    .clock { flex-direction: column; line-height: 19px; width: 72px; margin-right: -14px; }
    .notif { width: 54px; background: #000; position: relative; border-right: 1px solid #555; margin-right: 3px; }
    .badge { position: absolute; left: 27px; top: 17px; width: 17px; height: 17px; border: 1px solid #888; border-radius: 9px; background: #333; text-align: center; line-height: 15px; }
    .ime { position: absolute; left: 702px; top: 3px; width: 206px; height: 24px; background: #fff; border: 1px solid #b4c4d8; display: flex; align-items: center; justify-content: space-between; padding: 0 3px 0 0; color: #1b74c4; font-size: 14px; font-weight: 700; }
    .ime .ic { width: 17px; height: 17px; }
    .ime .s { width: 29px; height: 29px; margin: -6px -2px 0 -2px; }
    .ball { position: absolute; left: 1076px; top: -30px; width: 48px; height: 48px; border-radius: 24px; background: #3fc463; border: 2px solid #dfe8e2; box-shadow: 0 2px 5px #888; color: #fff; font-weight: 700; line-height: 12px; display: flex; align-items: flex-end; justify-content: center; padding-bottom: 3px; }
  `;

  private cad() {
    return html`<svg class="cad" role="img" aria-label="平面图">
      <g fill="#007cf6"><path d="M1091 0h3000v29H1091zM1091 266h3000v41H1091z"/><path d="M529 57h81l10 81h-91z"/></g>
      <g fill="#00f500"><path d="M1139 29h21v237h-21zM0 72h59v20H0z"/></g>
      <g fill="#7a00f5"><path d="M367 284h232v40H367zM700 304h233v20H700zM806 160h21v40h-21z"/></g>
      <path d="M529 57h81l10 80h-91z" fill="none" stroke="#fff" stroke-dasharray="5 3"/>
      ${MAIN_AXES.map(([x, n, c]) => svg`<text x=${x} y="18" fill=${c} text-anchor="middle">${n}</text>`)}
      ${V_AXES.map((x) => svg`<path d="M${x} 0h1v2000h-1z" fill="#800000"/>`)}
      ${MAIN_AXES.map(([x]) => svg`<path d="M${x} 0h1v2000h-1z" fill="#f00"/>
        <circle cx=${x + 0.5} cy="13" r="12.500" fill="none" stroke="#008000"/>`)}
      ${H_AXES.map((y) => svg`<path d="M0 ${y}h4000v1H0z" fill="#800000"/>`)}
      <path d="M53 258v-37h-2l4-14 4 14h-2v37z" fill="#0f0"/>
      <path d="M55 255h37v-2l14 4-14 4v-2H55z" fill="#f00"/>
      <text x="64" y="220" fill="#0c0">Y</text><text x="92" y="246" fill="#e00">X</text>
      <rect x="494.500" y="29.500" width="186" height="136" fill="none" stroke="#f00" stroke-width="7"/>
    </svg>`;
  }

  private tree() {
    return html`<ul class="tree">${TREE.map((n) => n.depth === 0
      ? html`<li>${icon(n.open ? "down" : "right", "fold")}${icon(n.icon)}<span class="lbl">${n.text}</span></li>`
      : html`<li class="leaf"><span class="twig"></span><span class=${classMap({ pair: true, sel: !!n.sel })}>${icon(n.icon)}<span class="lbl">${n.text}</span></span></li>`)}</ul>`;
  }

  render() {
    return html`
      <div class="title">${icon("logo")}
        <h1>广联达BIM钢筋算量软件 GGJ2013 - [C:\\Users\\Administrator.PC-20141127NRHM\\Desktop\\白龙村-2018-02-02-19-24-35</h1>
        ${["min", "restore", "close"].map((n) => html`<button class="winbtn" aria-label=${n}>${icon(n)}</button>`)}
      </div>
      <div class="bars account">
        <div class="bar tip">后浇带在外墙后浇带中..</div>
        <div class="bar user"><a href="#">${icon("user")}13907298339 ${tri}</a><a href="#">造价豆:0</a>${icon("bell")}${icon("more", "push")}</div>
      </div>
      <div class="bars">
        <div class="bar quick">${tool("page", "")}${tool("open", "", { split: true })}${tool("save", "")}${sep}${tool("undo", "", { split: true })}${icon("more", "push")}</div>
        <div class="bar mid">${tool("define", "定义")}${tool("sigma", "汇总计算")}${tool("cloud", "云检查")}${tool("align", "平齐板顶")}${tool("find", "查找图元")}${tool("glasses", "查看钢筋量", { on: true })}${tool("batch", "批量选择")}${icon("more", "push")}</div>
        <div class="bar view">${tool("rect2d", "二维", { split: true })}${tool("cube", "俯视", { split: true })}${tool("orbit", "动态观察")}${tool("local3d", "局部三维")}${sep}${tool("full", "全屏")}${tool("zoom", "缩放", { split: true })}${tool("pan", "平移", { split: true })}${tool("screenrot", "屏幕旋转", { drop: true })}${sep}${tool("floors", "选择楼层")}${icon("more", "push")}</div>
      </div>
      <div class="body">
        <nav class="nav">
          <header><span>模块导航栏</span>${icon("pin")}${icon("close")}</header>
          <button class="tab">工程设置</button><button class="tab">绘图输入</button>
          <div class="treebox">
            <div class="treebar">${icon("expand")}${icon("collapse")}</div>
            <div class="scroll">${this.tree()}<div class="sb">${icon("up")}<div class="thumb"></div></div></div>
          </div>
          <button class="tab">单构件输入</button><button class="tab">报表预览</button>
        </nav>
        <main class="work">
          <div class="rows">
            <div class="line"><div class="bar">${handle}${tool("brush", "删除")}${sep}${tool("copy", "复制")}${tool("mirror", "镜像")}${sep}${tool("move", "移动")}${tool("rotate", "旋转")}${sep}${tool("extend", "延伸", { off: true })}${tool("trim", "修剪", { off: true })}${sep}${tool("brk", "打断", { off: true })}${tool("merge", "合并", { off: true })}${tool("split", "分割", { off: true })}${sep}${tool("alignto", "对齐", { drop: true })}${tool("offset", "偏移", { off: true })}${tool("stretch", "拉伸", { off: true })}${sep}${tool("grip", "设置夹点", { off: true })}</div></div>
            <div class="line">
              <div class="bar">${handle}${combo("楼层", "首层", "short")}${combo("类型", "柱")}${combo("构件类型", "框柱")}${combo("构件", "KZ-66")}${sep}${tool("prop", "属性")}${tool("editbar", "编辑钢筋")}${tool("list", "构件列表")}${tool("pick", "拾取构件")}</div>
              <div class="bar">${handle}${tool("twopt", "两点")}${tool("parallel", "平行")}${tool("ptangle", "点角", { split: true })}${tool("threept", "三点辅轴", { split: true })}${tool("brush", "删除辅轴")}${tool("dim", "尺寸标注", { split: true })}</div>
            </div>
            <div class="line">
              <div class="bar">${handle}${tool("cursor", "选择", { split: true })}${sep}${tool("point", "点")}${tool("rotpoint", "旋转点")}${sep}${tool("smart", "智能布置", { drop: true })}${sep}${tool("insitu", "原位标注")}${tool("coltable", "图元柱表")}${tool("adjust", "调整柱端头")}${tool("bywall", "按墙位置绘制柱", { split: true })}${tool("autocorner", "自动判断边角柱")}${tool("checkdim", "查改标注", { split: true })}</div>
              <div class="bar stub">${handle}</div>
            </div>
          </div>
          ${this.cad()}
          <div class="snapbar">
            <div class="bar">${handle}${tool("ortho", "正交")}${tool("snap", "对象捕捉", { on: true })}${tool("dyninput", "动态输入")}</div>
            <div class="bar">${handle}${tool("xcross", "交点")}${tool("perp", "垂点", { on: true })}${tool("mid", "中点", { on: true })}${tool("vertex", "顶点")}${tool("coord", "坐标")}</div>
            <div class="bar">${handle}${combo("偏移方式", "不偏移", "short")}${sep}<span class="dim">X=</span>${spin("X", "0")}<span class="dim">mm</span><span class="dim">Y=</span>${spin("Y", "0")}<span class="dim">mm</span>${sep}<label class="rot"><input type="checkbox" />旋转</label>${spin("旋转角度", "0.000", "wide")}<span class="dim">°</span></div>
          </div>
          <section class="result">
            <div class="dots"><svg class="ic" viewBox="0 0 16 16"><path d="M1.500 1.500h9v8h-9z" fill="#ddd" stroke="#444"/><path d="m3 3 6 6M9 3 3 9" stroke="#501818" stroke-width="1.500"/></svg><i></i></div>
            <div class="pane">
              <h2>钢筋总重量 ( Kg ) : 429.166</h2>
              <div class="sheet">
                <table>
                  <colgroup><col class="n" /><col class="a" /><col class="b" /><col class="c" /><col class="c" /><col class="c" /><col class="c" /></colgroup>
                  <thead>
                    <tr><th rowspan="2"></th><th rowspan="2" class="hot">构件名称</th><th rowspan="2">钢筋总重量（Kg）</th><th colspan="4">HRB400</th></tr>
                    <tr><th>8</th><th>18</th><th>22</th><th>合计</th></tr>
                  </thead>
                  <tbody>
                    <tr><th class="hot">1</th><td class="cur">KZ-66[1703</td>${["429.166", "181.518", "185.616", "62.032", "429.166"].map((v) => html`<td>${v}</td>`)}</tr>
                    <tr class="sum"><th>2</th><td>合计</td>${["429.166", "181.518", "185.616", "62.032", "429.166"].map((v) => html`<td>${v}</td>`)}</tr>
                  </tbody>
                </table>
              </div>
            </div>
          </section>
          <div class="mark"></div>
        </main>
      </div>
      <footer class="status"><span class="w1">X=72752 Y=3708</span><span class="w2">层高:4.5m</span><span class="w3">底标高:-0.05m</span><span class="w4">1(1)</span><span class="w5">请按鼠标左键选择图元，或拉框选择，按右键中止或ESC取消</span><span class="w6">401.7 FPS</span></footer>
      <div class="task">
        <button class="start" aria-label="开始">${icon("win")}</button>
        <label class="search">${icon("cortana")}<input placeholder="在这里输入你要搜索的内容" aria-label="搜索" />${icon("tmic", "mic")}</label>
        <div class="apps">
          <button class="app" aria-label="任务视图">${icon("taskview", "tv")}</button>
          ${([["clover", ""], ["eWhite", ""], ["gOutline", ""], ["edge", ""], ["ie", ""], ["explorer", ""], ["gBlue", "run"], ["logo", "act"], ["note", "run"], ["eGreen", "run"]]).map(([n, c]) => html`<button class="app ${c}" aria-label=${n}>${icon(n)}</button>`)}
        </div>
        <div class="tray"><span>链接</span>${icon("chevUp")}${icon("battery")}${icon("wifi")}${icon("sound")}${icon("tkeys", "kb")}<span>中</span>${icon("sogou")}
          <span class="clock"><span>22:42</span><span>2018/4/18</span></span>
          <button class="notif" aria-label="通知"><svg class="ic" viewBox="0 0 16 16"><path d="M0 1h16v11h-4v4l-4-4H0z" fill="#fff"/><path d="M3 4h10M3 6.500h10M3 9h7" stroke="#000"/></svg><span class="badge">1</span></button>
        </div>
      </div>
      <div class="ime">${icon("sogou", "s")}<span>英</span>${["punct", "smile", "mic", "keys", "person", "shirt", "wrench"].map((n) => icon(n))}</div>
      <div class="ball">67</div>`;
  }
}
